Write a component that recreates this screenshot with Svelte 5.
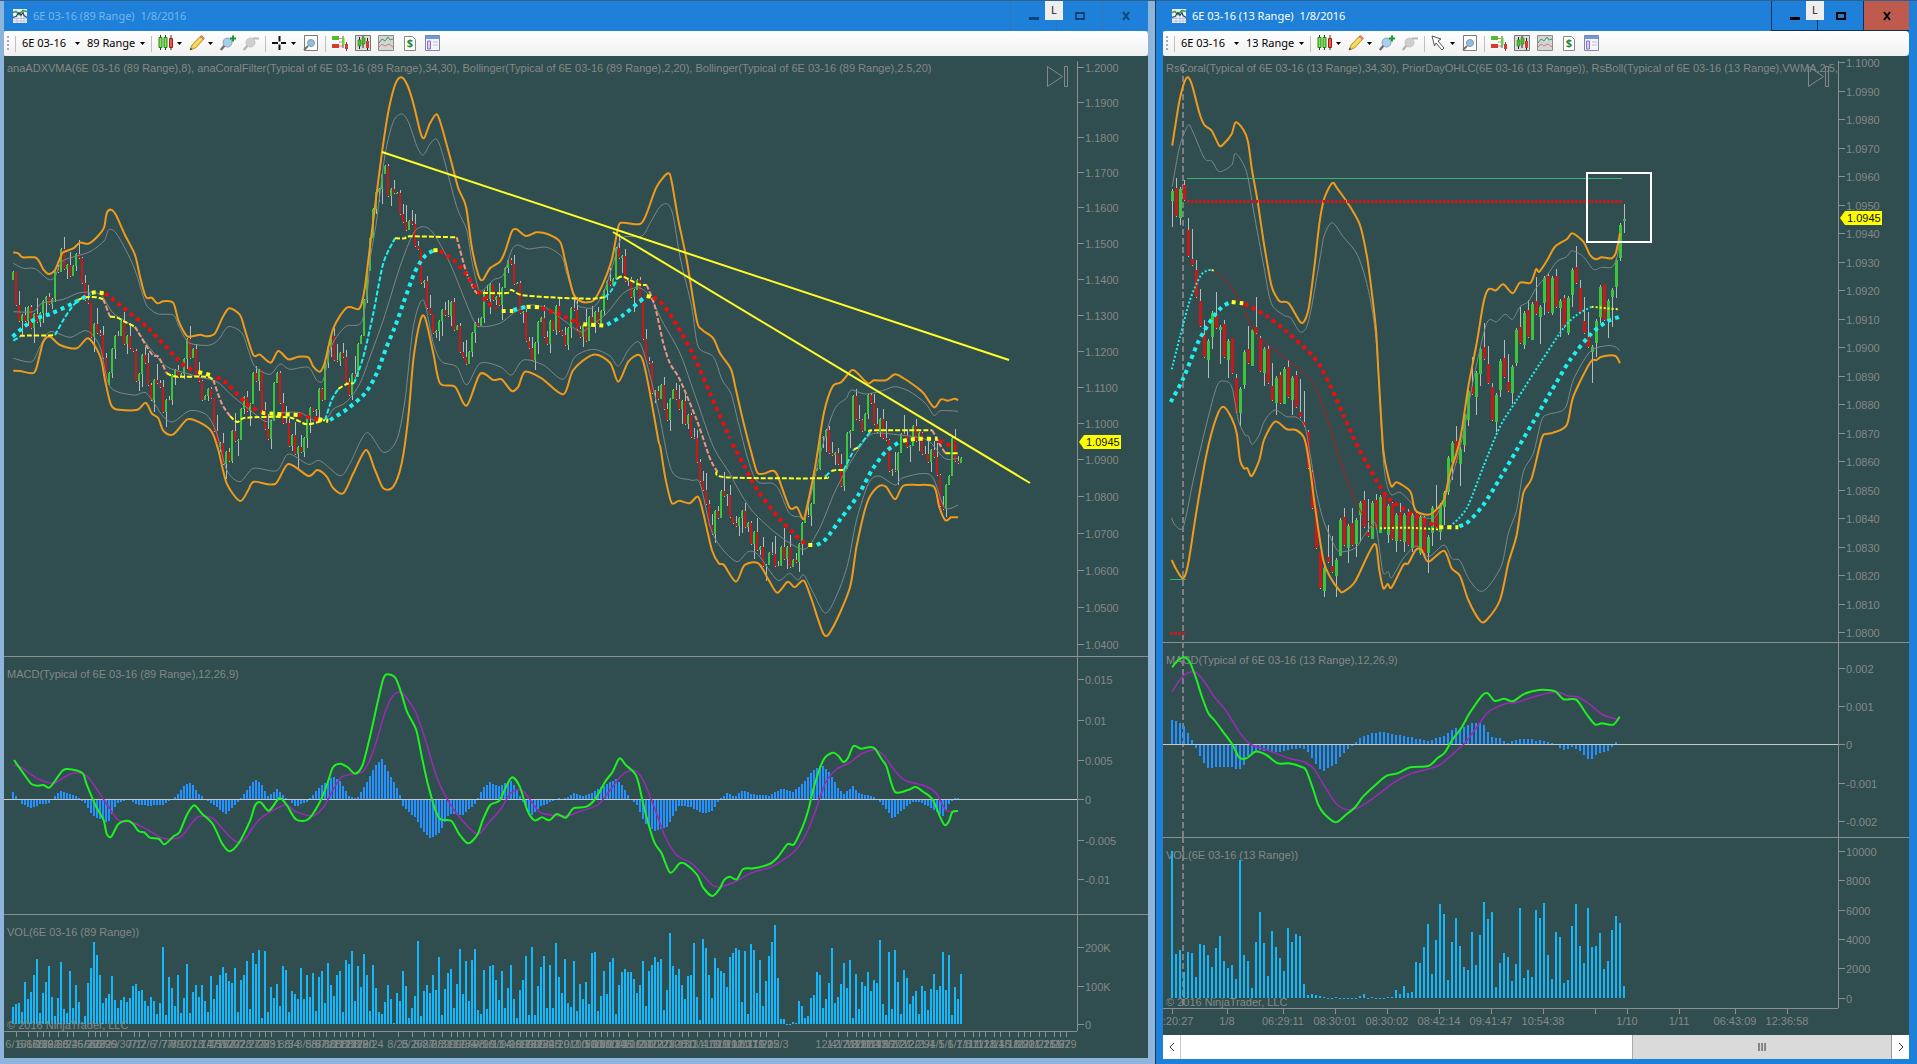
<script>
  // Every trace belongs to a tile: an origin on the chart and the number of
  // trace units per pixel on each axis.
  const tile = (x0, y0, sx = 3, sy = 3) => (points) =>
    points.split(" ").map((pair) => {
      const [x, y] = pair.split(",").map(Number);
      return [x0 + x / sx, y0 + y / sy];
    });

  const topLeft = tile(0, 0);
  const midLeft = tile(0, 200);
  const peak = tile(330, 60);
  const recent = tile(600, 200, 2.904);
  const lowLeft = tile(0, 650, 2.703);
  const lowRight = tile(560, 650, 2.658);
  const fastTop = tile(1140, 0, 2.018);
  const fastMid = tile(1140, 220);
  const fastLow = tile(1140, 630, 2.018);

  // Catmull-Rom spline through the points
  function curve(pts) {
    let d = `M${pts[0][0].toFixed(1)} ${pts[0][1].toFixed(1)}`;
    for (let i = 0; i < pts.length - 1; i++) {
      const p0 = pts[i - 1] ?? pts[i];
      const p1 = pts[i];
      const p2 = pts[i + 1];
      const p3 = pts[i + 2] ?? p2;
      const c = [
        p1[0] + (p2[0] - p0[0]) / 7,
        p1[1] + (p2[1] - p0[1]) / 7,
        p2[0] - (p3[0] - p1[0]) / 7,
        p2[1] - (p3[1] - p1[1]) / 7,
        p2[0],
        p2[1],
      ];
      d += "C" + c.map((n) => n.toFixed(1)).join(" ");
    }
    return d;
  }

  const line = (kind, ...parts) => ({ kind, d: curve(parts.flat()) });
  const segments = (kind, at, list) =>
    list.map(([tone, pts]) => line(`${kind} ${tone}`, at(pts)));

  function valueAt(pts, x) {
    let i = 1;
    while (i < pts.length - 1 && pts[i][0] < x) i++;
    const [a, b] = [pts[i - 1], pts[i]];
    const t = Math.min(1, Math.max(0, (x - a[0]) / (b[0] - a[0])));
    return a[1] + (b[1] - a[1]) * t;
  }

  function bar(x, y, base) {
    return { x, y: Math.min(y, base), h: Math.max(1, Math.abs(base - y)) };
  }

  const nums = (text) => text.trim().split(/[\s,]+/).map(Number);
  const columns = (text, x0, step, top, base) =>
    nums(text).map((v, i) => bar(x0 + i * step, top + v / 3, base));

  // ---- 89 range chart ----
  const swings = nums(
    `13 280 17 305 22 322 26 310 31 325 37 315 44 310 52 290 60 255 66 272 78 262 84 285 88 310 92 335
     97 330 104 355 107 400 110 375 115 330 120 325 127 345 131 345 137 380 142 365 147 375 152 395 157 375
     162 410 167 405 172 375 178 385 184 350 188 345 194 360 198 385 203 395 210 400 214 425 220 450 228 465
     233 430 238 440 243 405 248 405 254 375 258 370 265 435 270 430 276 375 286 430 290 440 297 455 305 435
     313 405 323 390 329 335 336 360 343 365 350 390 357 360 363 320 368 250 376 200 382 165 386 175 390 200
     394 190 401 210 406 240 412 218 417 250 421 275 430 320 438 335 444 310 450 305 456 330 463 363 470 350
     478 320 486 290 492 295 497 305 503 285 511 258 515 280 521 310 530 360 540 325 547 335 556 315 563 345
     572 315 578 325 585 335 592 320 600 315 608 285 613 270 618 245 624 275 630 290 638 290 641 320 648 365
     655 400 662 390 667 420 675 390 683 410 690 430 697 455 701 490 705 510 712 525 720 505 723 490 730 510
     737 540 742 505 748 530 756 545 766 565 775 560 785 550 792 570 800 540 806 520 812 490 818 455 824 430
     832 455 841 480 847 440 853 405 860 430 868 405 875 420 883 430 891 480 900 445 908 440 915 430 925 460
     931 450 940 500 945 500 950 460 953 440 957 475 962 445`
  ).reduce((out, n, i, all) => (i % 2 ? out : [...out, [n, all[i + 1]]]), []);

  function rangeBars(path, from, to, step, range) {
    const out = [];
    let close = path[0][1];
    for (let x = from, i = 0; x <= to; x += step, i++) {
      const open = close;
      close = valueAt(path, x) + [-8, 6, 9, -7, 8, -9, 3, -6, 7, 0, -10][i % 11];
      const up = close < open;
      const high = up ? close - 1 : Math.max(close - range, Math.min(open, close) - ((i * 7) % 20));
      const low = up ? Math.min(close + range, open + ((i * 5) % 20)) : close + 1;
      out.push({
        x,
        up,
        top: Math.min(open, close),
        bottom: Math.max(open, close),
        high: Math.min(high, open),
        low: Math.max(low, open),
      });
    }
    return out;
  }

  const slowBands = [
    line(
      "inner",
      topLeft("40,790 70,805 105,806 145,838 165,830 185,785 230,768 270,755 312,723 325,690 345,695 375,745 405,810 435,905 450,927 475,942 520,945"),
      midLeft("535,375 550,405 570,430 625,436 655,420 685,380 725,398 745,450 765,500 810,523 840,492 870,508 925,502 950,540 970,540 990,450 1010,410 1040,378 1075,375 1090,350 1105,250"),
      peak("120,600 140,480 165,285 190,185 215,162 235,185 262,262 280,285 300,252 320,238 340,290 380,440 410,510 425,600 445,685 460,690 490,660 520,645 545,570 565,555 595,567 650,562 695,590 710,640 740,730 760,742 790,742 820,700 850,610 875,535 935,528 960,490 990,440 1014,433 1030,470 1050,590 1085,740 1105,860 1150,890"),
      recent("355,540 380,580 400,660 430,780 457,845 500,850 520,870 550,940 580,950 598,945 640,760 680,630 715,595 730,570 770,582 820,572 857,560 900,575 945,610 970,646 990,632 1040,634")
    ),
    line(
      "inner",
      midLeft("40,335 100,335 125,310 190,298 240,278 300,283 340,340 400,380 450,445 500,500 560,520 600,532 650,545 700,590 750,630 800,665 840,640 900,638 940,660 980,655 1000,627 1040,605 1080,550 1110,470 1150,360 1200,200 1240,100 1270,80 1300,100 1350,190 1420,360 1445,380 1500,370"),
      peak("550,760 600,735 650,745 700,780 750,815 780,800 830,760 880,700 925,683 960,710 1000,790 1050,880 1100,1020 1150,1160"),
      recent("377,820 400,865 440,930 500,990 560,1035 600,1045 640,980 680,880 720,800 770,720 800,700 870,705 950,720 1000,775 1040,775")
    ),
    line(
      "inner",
      midLeft("40,475 95,485 120,440 150,395 210,412 260,392 300,440 330,560 400,585 440,580 490,650 520,665 570,632 620,645 650,700 680,810 720,845 760,805 830,812 865,762 925,793 960,782 1020,827 1050,790 1100,698 1150,757 1190,720 1215,600 1240,380 1270,300 1300,430 1325,485 1370,500 1400,555 1440,490 1500,500"),
      peak("545,945 580,900 640,915 700,958 735,890 790,868 840,888 865,918 895,870 925,845 945,890 985,1050"),
      recent("208,812 263,840 290,850 320,980 350,1040 397,1085 430,1055 460,1065 515,1140 550,1120 575,1140 592,1125 620,1180 655,1240 690,1180 720,1090 745,960 780,850 810,828 857,855 880,833 960,825 1000,922 1040,915")
    ),
    line(
      "band",
      topLeft("40,757 55,760 68,772 105,772 118,785 130,808 147,822 165,810 180,775 190,757 220,745 240,728 265,731 292,710 312,683 320,640 333,629 348,645 375,705 405,765 420,830 435,885 443,895 455,893 472,910 490,904 515,905 523,915"),
      midLeft("535,360 550,392 565,410 600,404 620,409 645,400 668,352 688,325 720,345 735,390 760,465 780,464 812,488 835,453 865,478 895,470 925,472 940,500 960,515 975,485 1000,385 1040,323 1075,328"),
      peak("95,730 105,680 120,560 140,400 157,270 175,155 195,75 213,52 232,75 250,130 272,220 283,233 300,190 320,163 335,200 365,310 385,385 408,440 425,560 445,645 458,660 480,625 510,605 525,575 545,515 560,508 588,528 620,517 655,523 690,545 705,600 730,700 755,725 790,722 815,680 845,600 865,500 880,488 930,492 950,460 980,380 1014,340 1025,365 1045,480 1070,600 1100,780 1115,808 1150,835 1170,880"),
      recent("380,507 395,570 415,660 440,760 457,818 480,820 500,812 515,825 550,922 572,922 590,958 600,925 625,800 650,640 675,560 700,547 730,511 745,517 778,550 795,541 830,541 857,523 885,537 920,562 940,580 970,622 990,598 1010,602 1030,596 1040,601")
    ),
    line(
      "band",
      midLeft("40,512 60,513 102,518 118,470 130,425 150,410 180,435 230,445 265,415 300,468 315,540 330,605 345,627 410,630 437,608 455,640 475,655 490,692 520,703 562,658 600,668 635,695 655,750 680,850 720,903 745,870 762,845 825,852 865,792 925,828 952,810 980,830 1000,865 1030,880 1060,820 1098,750 1125,810 1150,865 1180,860 1205,790 1225,650 1240,480 1260,365 1275,353 1300,460 1320,550 1365,560 1400,617 1440,522 1480,540"),
      peak("515,958 545,993 565,980 585,935 635,955 700,1003 730,930 790,884 840,908 865,965 895,905 925,884 940,905 960,1000 985,1140"),
      recent("175,740 190,835 208,908 230,902 260,910 285,890 300,940 325,1050 345,1090 360,1095 395,1145 420,1095 460,1090 490,1140 515,1178 545,1145 565,1162 592,1142 615,1200 650,1303 675,1285 725,1165 745,1040 775,910 805,862 830,860 857,898 880,858 920,855 970,860 985,920 1003,961 1020,952 1040,952")
    ),
  ];

  const slowOverlays = [
    ...segments("adx", midLeft, [
      ["cyan", "40,422 60,410"],
      ["yellow", "60,407 165,406"],
      ["cyan", "165,405 190,360 215,322 235,300"],
      ["yellow", "235,300 255,292 290,292 310,298"],
      ["salmon", "310,298 330,350"],
      ["yellow", "330,350 350,352 380,368 405,380"],
      ["salmon", "405,380 455,462 475,470 500,520"],
      ["yellow", "500,520 530,530 620,530 640,540"],
      ["salmon", "640,540 665,610 690,648"],
      ["yellow", "690,648 712,666 740,653 865,652 920,673 975,660"],
      ["cyan", "975,660 995,600 1015,567"],
      ["yellow", "1015,567 1040,552 1062,550"],
      ["cyan", "1062,550 1090,470 1120,340 1150,190 1185,115"],
      ["yellow", "1185,115 1215,115 1230,109 1370,112"],
      ["salmon", "1370,112 1400,220 1428,278"],
    ]),
    ...segments("adx", peak, [
      ["yellow", "438,698 510,700 535,698 545,690 575,705 660,712 780,716 825,712"],
      ["cyan", "825,712 845,690 862,655"],
      ["yellow", "862,655 880,650 925,673 950,675"],
      ["salmon", "950,675 975,740 1000,850 1020,910 1050,960 1100,1080 1140,1195 1160,1232"],
    ]),
    ...segments("adx", recent, [
      ["yellow", "339,812 365,832 640,835 655,828"],
      ["cyan", "655,828 672,813"],
      ["yellow", "672,813 685,810 708,810"],
      ["cyan", "708,810 738,748"],
      ["yellow", "738,748 750,742"],
      ["cyan", "750,742 785,695"],
      ["yellow", "785,695 795,691 965,691"],
      ["salmon", "965,691 985,730 1003,760"],
      ["yellow", "1003,760 1040,760"],
    ]),
    ...segments("coral", midLeft, [
      ["cyan", "38,410 75,378 110,355 150,342 215,312 270,282"],
      ["yellow", "275,278 290,277 315,280"],
      ["red", "315,280 370,323 450,390 545,490 590,515"],
      ["yellow", "595,516 630,525"],
      ["red", "650,532 680,550 740,612 785,637"],
      ["yellow", "785,637 800,640 895,645"],
      ["red", "895,645 955,658"],
      ["yellow", "955,658 985,662"],
      ["cyan", "990,660 1040,628 1095,580 1130,520 1160,440 1185,380 1210,310 1245,215 1275,168 1300,152"],
      ["yellow", "1300,151 1315,150"],
      ["red", "1320,153 1360,180 1395,218 1430,268 1460,305 1490,325"],
    ]),
    ...segments("coral", peak, [
      ["yellow", "515,753 550,753"],
      ["cyan", "550,750 590,740"],
      ["yellow", "590,740 630,742"],
      ["red", "635,744 700,768 750,793"],
      ["yellow", "760,793 825,797"],
      ["cyan", "832,794 880,765 940,715"],
      ["yellow", "950,708 970,712"],
      ["red", "970,712 1000,735 1040,795 1090,885 1140,1000 1200,1135"],
    ]),
    ...segments("coral", recent, [
      ["red", "385,732 420,800 460,875 520,955 580,1018 598,1030"],
      ["yellow", "605,1035 622,1035"],
      ["cyan", "630,1035 655,1018 700,955 750,885 790,810 830,755 875,722"],
      ["yellow", "880,722 915,717 980,716"],
      ["red", "985,722 1035,745"],
    ]),
    { kind: "trend", d: "M382 152 L1009 360" },
    { kind: "trend", d: "M613 232 L1030 483" },
  ];

  const slowMacd = [
    line(
      "signal",
      lowLeft("38,345 55,350 80,370 105,388 145,400 175,380 205,368 235,378 260,415 290,465 320,510 360,518 400,540 440,565 485,563 505,540 535,500 575,505 600,535 635,573 660,570 685,530 710,500 770,465 800,485 845,498 875,470 900,420 925,380 965,370 985,360 1010,300 1040,190 1060,140 1080,127 1100,145 1125,190 1150,270 1180,380 1210,450 1245,505 1290,552 1320,520 1355,475 1380,430 1410,420 1440,460 1465,490 1530,498"),
      lowRight("50,485 100,465 130,425 160,380 185,362 205,365 225,400 250,470 280,560 310,615 350,640 380,675 405,705 425,711 470,693 510,668 560,652 595,628 625,602 655,550 680,480 705,400 735,358 770,338 800,312 835,300 860,315 885,355 915,390 970,408 1000,430 1025,480 1055,485")
    ),
    line(
      "macd",
      lowLeft("38,330 60,365 85,402 105,407 118,405 135,412 165,367 178,357 210,362 225,372 235,405 260,470 280,510 288,550 300,561 320,522 345,512 360,522 375,544 390,547 405,563 430,567 445,583 470,558 485,547 505,495 525,466 545,490 575,522 600,580 620,604 645,580 675,515 690,465 705,457 727,482 755,445 775,465 800,508 833,508 865,455 885,400 900,352 920,341 940,352 960,371 980,345 1000,260 1020,160 1035,90 1045,73 1068,82 1085,130 1100,185 1125,240 1140,320 1155,395 1175,475 1190,508 1220,513 1240,550 1265,580 1290,555 1305,510 1325,465 1350,452 1370,405 1385,382 1405,410 1425,480 1445,511 1465,502 1485,511 1505,492 1530,503 1550,475"),
      lowRight("70,470 95,445 120,395 140,365 158,325 175,345 200,372 210,405 225,480 250,575 270,610 293,668 318,640 335,643 365,675 380,712 405,738 425,715 435,692 450,680 470,688 487,657 515,655 557,642 580,620 605,582 622,583 645,530 660,480 675,410 700,330 725,308 740,318 753,336 765,325 780,288 800,296 825,291 838,297 855,328 868,350 890,425 925,420 945,411 965,425 990,448 1010,500 1022,525 1033,515 1043,486 1058,483")
    ),
  ];

  const slowHistShape = [
    ...lowLeft("35,427 45,440 60,462 85,475 110,462 135,460 150,437 165,422 180,430 210,440 230,460 250,497 292,518 315,462 345,447 375,465 405,467 440,465 460,452 480,435 500,405 518,398 535,430 555,447 580,465 610,493 640,460 660,430 690,388 705,400 725,440 750,417 770,440 800,470 830,455 860,415 900,380 920,395 945,440 965,447 985,410 1010,355 1032,325 1050,365 1080,430 1090,470 1125,505 1140,540 1165,567 1190,545 1215,490 1250,497 1285,460 1305,415 1325,397 1350,410 1380,390 1400,425 1415,460 1437,497 1460,470 1490,455 1510,445"),
    ...lowRight("10,446 38,430 65,438 90,425 120,405 150,387 165,405 185,445 205,465 225,520 252,543 285,530 315,468 345,470 380,490 405,483 425,448 445,428 465,440 487,420 510,432 555,437 590,415 620,425 650,395 670,365 697,345 715,365 740,415 755,433 778,408 795,430 835,440 860,467 885,507 910,480 940,453 965,460 1000,485 1018,497 1035,460 1050,445 1060,445"),
  ];
  const slowHist = Array.from({ length: 316 }, (_, i) =>
    bar(12 + i * 3, valueAt(slowHistShape, 13 + i * 3), 799)
  );

  const slowVolume = columns(
    `1070 1062 1059 1086 996 1047 1026 975 927 1089 1029 996 948 1041 1098 1045 936 1078 1088 963 1074 1005 1056 1117
     1099 999 954 877 915 975 1059 1045 1032 978 1050 1074 1050 1041 1056 1045 1008 1002 1023 1020 1053 1068 1041 1053
     1092 1060 891 1096 981 1014 1068 975 1089 1045 942 1089 1026 1005 1041 1005 1053 1086 978 1047 1005 975 951 969
     993 999 954 1086 990 975 933 1077 909 942 900 1104 903 1087 1011 1045 1002 1068 948 960 1086 1023 1032 1047
     954 1047 975 1041 969 1083 981 963 1060 939 1005 1038 975 963 1087 930 941 903 1053 948 1012 912 975 1083
     945 1014 1087 1092 1056 1005 1047 1119 1029 1053 963 1008 1104 1074 1038 873 1098 1023 1005 1029 975 1020 921 1095
     1017 969 957 1074 1002 897 1032 933 1053 930 897 1080 1092 960 1077 948 945 990 1050 963 1074 1014 945 1047
     1104 1020 990 918 1095 891 1095 1008 951 918 1074 945 1074 879 981 1029 927 1059 1071 933 1083 1002 1047 996
     1062 909 906 1083 1038 963 1032 936 924 1092 1005 966 957 966 966 987 1029 1005 933 1068 963 945 921 936
     927 1080 1020 849 948 975 957 1005 1047 978 975 879 1041 1110 867 894 975 1045 924 954 963 969 1011 921
     909 894 900 1056 903 1092 882 900 1029 930 1068 993 918 876 825 984 1107 1107 1122 1122 1116 1119 1053 1068
     1104 1098 1044 1035 966 975 1074 1047 999 894 1059 1041 1002 939 1014 930 1104 972 1077 996 1008 966 1023 990
     999 870 1062 1095 906 1077 900 996 1092 960 984 1062 1038 1023 1092 1008 1023 1080 1017 972 1020 1008 906 1020
     915 1095 1011 1047 972`,
    12, 3, 650, 1024
  );

  const slowDates =
    `16 6/16,28 6/17,37 6/18,43 6/19,49 6/22,58 6/23,67 6/24,73 6/25,88 6/26,95 6/28,100 6/29,107 6/29,121 6/30,134 7/1,
     139 7/2,148 7/6,160 7/7,169 7/8,175 7/9,181 7/10,193 7/13,202 7/14,211 7/15,218 7/16,223 7/17,229 7/20,235 7/22,
     241 7/23,250 7/27,259 7/28,265 7/29,271 7/31,286 8/3,292 8/4,304 8/5,313 8/6,319 8/7,326 8/10,334 8/11,340 8/12,
     346 8/13,352 8/17,358 8/19,364 8/20,373 8/24,398 8/25,412 8/26,424 8/27,433 8/28,442 8/31,451 9/1,457 9/2,463 9/3,
     469 9/4,477 9/8,484 9/10,493 9/11,501 9/14,511 9/16,520 9/17,526 9/18,532 9/21,538 9/23,544 9/24,550 9/25,559 9/29,
     568 10/2,580 10/5,586 10/6,595 10/8,601 10/9,607 10/13,613 10/14,619 10/15,628 10/16,637 10/20,649 10/22,655 10/22,
     661 10/23,673 10/28,682 10/30,688 11/3,697 11/4,709 11/6,718 11/9,724 11/10,730 11/12,739 11/13,745 11/17,751 11/19,
     760 11/20,766 11/25,778 12/3,826 12/4,838 12/7,847 12/8,856 12/9,862 12/11,868 12/14,874 12/15,880 12/16,889 12/17,
     898 12/21,907 12/22,916 12/29,928 1/4,937 1/5,946 1/6,955 1/7,964 1/8,973 1/11,979 1/12,985 1/13,994 1/14,1000 1/15,
     1009 1/18,1018 1/19,1024 1/20,1030 1/21,1039 1/22,1045 1/25,1054 1/26,1060 1/27,1066 1/29`;
  const dates = (text) =>
    text.split(",").map((item) => {
      const [x, label] = item.trim().split(" ");
      return { x: Number(x), label };
    });

  // ---- 13 range chart ----
  // direction, body top, body bottom, wick end
  const fastBars = `g191,201,227 r188,216,178 g189,218,225 r185,200,180 r230,256,218 r259,265,229 r270,297,260 r301,326,289
    r335,357,320 g341,360,378 g313,337,349 r315,328,292 g327,330,364 r324,357,320 g341,360,378 r338,373,338 r378,412,374
    g389,413,426 g352,385,389 r349,363,326 g330,366,366 r327,333,297 r338,371,336 g349,373,386 r349,383,345 r386,400,363
    g378,403,415 r375,403,372 g369,404,404 r367,397,360 g378,400,415 r375,407,371 r412,417,379 r422,426,391 r432,468,430
    r472,508,470 r508,548,508 r552,588,552 g568,591,597 r557,562,525 r566,572,536 g560,576,597 g520,556,556 r517,545,508
    g526,548,563 r523,545,508 g520,544,557 g503,515,542 r500,527,491 r532,536,499 g503,539,539 r500,528,494 g497,533,533
    r493,528,492 g506,535,543 r503,539,502 g515,541,552 r512,540,503 g515,542,552 r512,545,509 g515,548,552 r513,548,511
    g517,553,555 r517,553,516 g537,553,573 g508,533,546 r510,527,485 g505,532,540 g493,507,525 g458,492,495 g443,462,480
    r441,462,426 g449,464,486 g414,445,452 g391,420,426 r386,394,357 g373,397,415 g349,374,386 r347,359,323 r364,383,346
    r387,420,383 g395,422,432 g361,390,397 r358,377,340 r382,391,354 g367,393,404 g330,363,366 r327,343,307 g313,345,349
    r310,337,300 g304,340,340 r301,314,277 g307,317,344 g278,303,315 r276,312,274 g278,313,315 r276,307,269 g301,308,337
    r298,327,295 g298,333,335 g270,295,307 r267,283,246 r288,312,280 r321,333,297 r337,347,312 g347,352,383 g321,343,357
    g287,317,323 r284,320,284 g301,321,338 g290,297,327 g260,287,298 g225,258,261`
    .trim()
    .split(/\s+/)
    .map((item, i) => {
      const up = item[0] === "g";
      const [top, bottom, wick] = item.slice(1).split(",").map(Number);
      return {
        x: 1172 + i * 4,
        up,
        top,
        bottom,
        high: up ? top - 2 : wick,
        low: up ? wick : bottom + 1,
      };
    });
  // the bar still forming has a wick on both sides
  fastBars.push({ x: 1624, up: true, top: 219, bottom: 221, high: 204, low: 233 });

  const fastBands = [
    line(
      "inner",
      fastTop("65,560 80,440 97,376 105,390 130,475 145,483 160,515 185,495 193,460 215,515 230,640 250,800 265,910 290,945 305,955 322,995 335,985 345,930 365,760 372,705 388,668 410,710 435,755 450,810 465,900"),
      fastMid("710,380 730,720 750,820 780,817 815,850 840,885 865,895 890,885 930,790 970,640 1000,480 1040,310 1070,305 1095,283 1118,298 1140,260 1165,245 1188,205 1222,165 1250,125 1280,110 1297,92 1330,110 1360,148 1385,142 1415,142 1430,115 1440,60")
    ),
    line(
      "inner",
      fastMid("95,893 105,915 130,920 160,780 200,610 230,500 250,483 275,500 295,600 315,645 325,648 336,673 355,650 375,600 405,570 440,590 470,592 495,620 510,700 530,820 550,900 580,970 600,995 645,985 670,950 700,910 708,915 720,1000 730,1060 745,1055 755,1073 790,1015 830,978 865,1010 912,975 935,1015 960,1022 985,1075 1018,1113 1045,1100 1085,1035 1105,940 1130,870 1150,755 1180,700 1205,600 1225,583 1275,565 1300,480 1350,395 1400,377 1425,380 1440,392")
    ),
    line(
      "band",
      fastTop("65,437 72,370 80,300 90,245 97,232 105,255 120,340 130,375 145,393 160,437 170,430 185,402 193,367 208,388 218,425 226,510 237,600 250,730 265,855 275,890 283,905 300,910 323,965 332,962 341,920 352,800 362,670 372,595 388,549 398,565 415,600 430,635 445,680 458,770 468,880"),
      fastMid("708,330 715,450 730,690 745,770 755,800 770,787 805,808 815,825 827,872 865,884 890,868 912,838 930,760 960,660 985,500 1010,370 1030,250 1043,210 1055,207 1068,211 1090,193 1118,220 1140,188 1172,188 1188,148 1198,155 1222,120 1245,80 1280,58 1297,40 1330,65 1350,105 1368,118 1385,112 1415,115 1428,97 1440,40")
    ),
    line(
      "band",
      fastMid("95,1020 110,1050 130,1075 145,1030 170,870 200,700 230,590 250,560 275,595 290,640 300,720 312,745 322,745 335,768 358,720 372,660 405,605 440,628 468,630 493,655 508,730 525,860 550,1020 570,1070 600,1113 610,1115 645,1085 690,992 708,975 718,1050 730,1105 743,1092 755,1102 790,1035 805,1030 827,990 845,990 865,1025 912,992 935,1045 960,1068 985,1140 1020,1202 1040,1200 1080,1140 1105,1030 1130,945 1150,820 1175,775 1205,655 1220,642 1240,638 1280,615 1300,530 1350,428 1370,420 1385,410 1425,407 1440,430")
    ),
  ];

  const fastOverlays = [
    { kind: "high", d: "M1187 178.5 H1622 M1170 579.5 H1186" },
    { kind: "low", d: "M1187 201.5 H1622" },
    { kind: "low", d: "M1170 633.5 H1185" },
    ...segments("dots", fastMid, [
      ["cyan", "95,448 120,350 150,240 180,170 200,152 215,150"],
      ["yellow", "215,150 225,153"],
      ["darkred", "225,153 270,195 310,265 350,345 430,408 500,465 530,510 570,620 610,750 660,870 700,920"],
      ["yellow", "720,925 800,923 895,928"],
      ["cyan", "930,920 980,865 1030,740 1080,620 1130,540 1200,430 1270,325 1310,285 1355,260"],
      ["yellow", "1355,260 1400,265 1437,268"],
    ]),
    ...segments("coral", fastMid, [
      ["cyan", "92,546 130,475 175,365 215,298 245,262 268,248"],
      ["yellow", "275,246 310,250"],
      ["red", "314,251 380,288 440,335 520,410 560,475 610,585 660,693 730,815 765,850 830,890 895,921"],
      ["yellow", "898,922 955,922"],
      ["cyan", "958,919 985,905 1030,855 1080,775 1130,690 1180,605 1230,520 1290,420 1350,345 1400,305 1437,291"],
    ]),
    { kind: "frame", d: "M1587 173 H1651 V242 H1587 Z" },
  ];

  const fastMacd = [
    line("signal", fastLow("65,185 80,150 95,130 112,127 130,155 150,200 175,245 200,305 222,342 260,362 300,385 330,395 350,415 365,450 390,510 405,532 425,540 445,530 475,500 510,460 545,432 580,418 605,405 625,380 655,340 680,290 700,250 715,235 740,220 762,217 800,198 840,187 865,198 882,200 905,220 935,255 965,268")),
    line("macd", fastLow("65,112 75,93 88,82 100,95 112,140 125,200 138,250 150,270 170,310 187,345 200,382 215,385 233,365 255,375 278,400 300,400 325,410 335,420 350,480 360,525 372,552 395,577 415,555 435,530 450,500 475,465 498,437 520,430 545,412 582,408 600,385 615,368 630,330 648,295 665,250 690,197 702,190 716,213 735,206 752,214 775,192 798,182 812,179 838,184 855,208 880,209 900,250 918,283 932,280 955,284 968,260")),
  ];

  const fastHist = columns(
    `270 274 280 288 309 330 353 378 400 413 413 411 411 411 411 411 416 416 404 378 374 366 359 362 363 366 366 366 363
     360 357 357 355 358 366 383 403 418 422 413 408 401 381 369 356 348 335 324 318 315 309 309 306 306 309 311 315 316
     318 320 321 327 327 330 332 330 324 320 318 309 300 294 297 290 284 279 279 276 285 307 320 323 323 333 339 333 331
     327 327 327 327 333 330 333 336 339 345 355 360 357 351 357 363 374 386 386 374 369 367 362 350 336`,
    1171, 4, 630, 744
  );

  const fastVolume = columns(
    `663 972 960 1026 966 969 1041 942 945 975 1011 954 918 993 1014 1005 1047 690 975 993 1074 936 846 939 1038 903 951
     984 1023 894 936 912 918 1062 1095 1092 1095 1098 1101 1104 1104 1101 1104 1104 1104 1104 1104 1098 1092 1104 1101
     1104 1104 1104 1101 1101 1080 1092 1068 1089 1086 996 999 951 882 1032 930 822 852 1050 936 864 948 1011 1020 906
     1005 915 816 867 846 1071 999 969 981 1053 1002 834 1045 1020 1041 840 864 819 975 1047 906 921 1059 1050 888 822
     948 999 834 951 948 909 1017 993 900 858 879 1068`,
    1171, 4, 630, 998
  );

  const priceScale = (ys, from, step) =>
    ys.map((y, i) => ({ y, label: (from - i * step).toFixed(4) }));
  const scale = (...pairs) => pairs.map(([y, label]) => ({ y, label }));

  const windows = [
    {
      id: "slow",
      caption: "6E 03-16 (89 Range)\u00a0 1/8/2016",
      interval: "89 Range",
      cursor: "cross",
      x: 4,
      width: 1144,
      axis: 1077,
      panels: [
        {
          y: 56,
          height: 600,
          titleY: 72,
          title:
            "anaADXVMA(6E 03-16 (89 Range),8), anaCoralFilter(Typical of 6E 03-16 (89 Range),34,30), Bollinger(Typical of 6E 03-16 (89 Range),2,20), Bollinger(Typical of 6E 03-16 (89 Range),2.5,20)",
          scale: priceScale([67, 102, 137, 172, 207, 243, 279, 315, 351, 387, 423, 459, 496, 533, 570, 607, 644], 1.2, 0.01),
          under: slowBands,
          candles: rangeBars(swings, 13, 963, 3, 32),
          candleWidth: 2,
          over: slowOverlays,
          price: 442,
          jump: 1047,
        },
        {
          y: 656,
          height: 258,
          titleY: 678,
          title: "MACD(Typical of 6E 03-16 (89 Range),12,26,9)",
          scale: scale([679, "0.015"], [720, "0.01"], [760, "0.005"], [799, "0"], [840, "-0.005"], [879, "-0.01"]),
          hist: slowHist,
          zero: 799,
          over: slowMacd,
        },
        {
          y: 914,
          height: 144,
          titleY: 936,
          title: "VOL(6E 03-16 (89 Range))",
          scale: scale([947, "200K"], [986, "100K"], [1024, "0"]),
          volume: slowVolume,
          copyright: 1029,
          floor: 1031,
          dates: dates(slowDates),
          dateY: 1048,
        },
      ],
    },
    {
      id: "fast",
      focused: true,
      caption: "6E 03-16 (13 Range)\u00a0 1/8/2016",
      interval: "13 Range",
      cursor: "arrow",
      x: 1163,
      width: 746,
      axis: 1838,
      panels: [
        {
          y: 56,
          height: 586,
          titleY: 72,
          title:
            "RsCoral(Typical of 6E 03-16 (13 Range),34,30), PriorDayOHLC(6E 03-16 (13 Range)), RsBoll(Typical of 6E 03-16 (13 Range),VWMA,2.5,20)",
          scale: priceScale(Array.from({ length: 21 }, (_, i) => Math.round(62 + i * 28.5)), 1.1, 0.001),
          session: [67, 642],
          under: fastBands,
          candles: fastBars,
          candleWidth: 3,
          over: fastOverlays,
          price: 218,
          jump: 1808,
        },
        {
          y: 642,
          height: 195,
          titleY: 664,
          title: "MACD(Typical of 6E 03-16 (13 Range),12,26,9)",
          scale: scale([668, "0.002"], [706, "0.001"], [744, "0"], [783, "-0.001"], [821, "-0.002"]),
          session: [642, 837],
          hist: fastHist,
          zero: 744,
          over: fastMacd,
        },
        {
          y: 837,
          height: 198,
          titleY: 859,
          title: "VOL(6E 03-16 (13 Range))",
          scale: scale([851, "10000"], [880, "8000"], [910, "6000"], [939, "4000"], [968, "2000"], [998, "0"]),
          session: [837, 1006],
          volume: fastVolume,
          copyright: 1006,
          floor: 1008,
          dates: dates(
            "1172 19:20:27,1227 1/8,1283 06:29:11,1335 08:30:01,1387 08:30:02,1439 08:42:14,1491 09:41:47,1543 10:54:38,1595 ,1627 1/10,1679 1/11,1735 06:43:09,1787 12:36:58"
          ),
          dateY: 1025,
        },
      ],
    },
  ];
</script>

{#snippet caret()}
  <svg class="caret" viewBox="0 0 5 3"><path d="M0 0h5L2.5 3z" /></svg>
{/snippet}

{#snippet chartIcon()}
  <svg class="chart-icon" viewBox="0 0 14 14">
    <path d="M0 0h14v14H0z" fill="#eef3f8" />
    <path d="M0 9.500h14M0 12h14M4 7v7M8 7v7M11 7v7" stroke="#b5b2da" stroke-width="0.800" />
    <path d="M0 3.500l3-1 3 3 4-4 4 1" fill="none" stroke="#3aa23c" stroke-width="1.600" />
    <path d="M0 8.500l3-1 3-4 2 3 2-3 1 3 3 2" fill="none" stroke="#29406d" stroke-width="1.200" />
  </svg>
{/snippet}

{#snippet glass(sign)}
  <svg viewBox="0 0 16 16">
    <path d="M5 10L0.800 15" stroke={sign === "minus" ? "#b5b5b5" : "#75706c"} stroke-width="2.400" />
    <circle cx="7.500" cy="7.500" r="4.500" fill={sign === "minus" ? "#cfcfcf" : "#a9cdec"} stroke={sign === "minus" ? "#c4c4c4" : "#8aa4bb"} />
    {#if sign === "plus"}
      <path d="M10 3.500h6M13 0.500v6" stroke="#159b2a" stroke-width="2" />
    {:else}
      <path d="M10 3.500h6" stroke="#b9b9b9" stroke-width="2" />
    {/if}
  </svg>
{/snippet}

<main class="desktop">
  {#each windows as win (win.id)}
    <section class="window" class:focused={win.focused} aria-label={win.caption}>
      <header class="caption">
        {@render chartIcon()}
        <h1>{win.caption}</h1>
        <div class="controls">
          <button aria-label="Minimize">
            <svg viewBox="0 0 10 10"><path d="M0 7.500h10" stroke-width="3" /></svg>
          </button>
          <button aria-label="Maximize">
            <svg viewBox="0 0 10 10"><path d="M1 2h8v6H1z" stroke-width="2" /></svg>
          </button>
          <button class="close" aria-label="Close">
            <svg viewBox="0 0 10 10"><path d="M2 1l6 8M8 1L2 9" stroke-width="2" /></svg>
          </button>
          <span class="link">L</span>
        </div>
      </header>

      <nav class="toolbar">
        <span class="grip"></span>
        <span class="sep"></span>
        <button class="text">6E 03-16 {@render caret()}</button>
        <button class="text">{win.interval} {@render caret()}</button>
        <span class="sep"></span>
        <button aria-label="Chart style">
          <svg viewBox="0 0 16 16">
            <path d="M2.500 0v15M7.500 0v15M13 0v15" stroke="#333" />
            <path d="M1 2.500h3v10H1zM6 2.500h3v10H6z" fill="#7be845" stroke="#26801c" />
            <path d="M11.500 3.500h3v9h-3z" fill="#f0564a" stroke="#9c1f17" />
          </svg>
          {@render caret()}
        </button>
        <button aria-label="Drawing tools">
          <svg viewBox="0 0 16 16">
            <path d="M1 15l2-5 8-8.500 3.500 3L6.500 13z" fill="#f5cf45" stroke="#a5812a" stroke-width="0.800" />
            <path d="M11 1.500l1.500-1.200 3 2.800-1 1.400z" fill="#e58a86" stroke="#b05b52" stroke-width="0.500" />
            <path d="M4.500 11.500l8-8.500" stroke="#fff0a0" />
            <path d="M1 15l0.800-2.200 1.600 1.400z" fill="#333" />
          </svg>
          {@render caret()}
        </button>
        <button aria-label="Zoom in">{@render glass("plus")}</button>
        <button aria-label="Zoom out">{@render glass("minus")}</button>
        <span class="sep"></span>
        <button aria-label="Cursor">
          {#if win.cursor === "cross"}
            <svg viewBox="0 0 16 16"><path d="M0 8h6M9 8h5M7.500 1v5.500M7.500 9.500V15" stroke="#111" stroke-width="2" /></svg>
          {:else}
            <svg viewBox="0 0 16 16">
              <path d="M1 1l9 3-3 2 6 7-2 2-6-7-1.500 3z" fill="#fff" stroke="#555" />
            </svg>
          {/if}
          {@render caret()}
        </button>
        <button aria-label="Zoom to selection">
          <svg viewBox="0 0 16 16">
            <path d="M1.500 0.500h13v15h-13z" fill="#fdfdfd" stroke="#7b7b7b" />
            <path d="M5 11l-4 4" stroke="#75706c" stroke-width="2" />
            <circle cx="8" cy="8" r="3.500" fill="#93bde0" stroke="#7f9bb8" />
          </svg>
        </button>
        <span class="sep"></span>
        <button aria-label="Chart trader">
          <svg viewBox="0 0 16 16">
            <path d="M0 1h7v4H0z" fill="#55bb2f" />
            <path d="M0 9h7v4H0z" fill="#d63a30" />
            <path d="M7 3.500h4M7 7h4M7 11h4" stroke="#e08a80" />
            <path d="M11 1v12M14.500 7v9" stroke="#555" />
            <path d="M10 3h2.500v7H10z" fill="#6ccd3f" />
            <path d="M13 9h3v5h-3z" fill="#d63a30" />
          </svg>
        </button>
        <button aria-label="Data series">
          <svg viewBox="0 0 16 16">
            <path d="M0.500 0.500h15v15H0.500z" fill="#dcdcdc" stroke="#777" />
            <path d="M4.500 2v12M8 1v12M12.500 3v12" stroke="#222" />
            <path d="M3 5h3v6H3zM7 3h3v6H7z" fill="#4fbf2c" stroke="#26801c" stroke-width="0.600" />
            <path d="M11 6h3v7h-3z" fill="#d63a30" />
          </svg>
        </button>
        <button aria-label="Indicators">
          <svg viewBox="0 0 16 16">
            <path d="M0.500 0.500h15v15H0.500z" fill="#d3d6d6" stroke="#8b8b8b" />
            <path d="M1 8l3-4 3 2 3-4 2 3 3-1" fill="none" stroke="#3f9c61" />
            <path d="M1 12l3-3 3 2 4-2 4 3" fill="none" stroke="#d97a72" />
          </svg>
        </button>
        <button aria-label="Strategies">
          <svg viewBox="0 0 16 16">
            <path d="M3.500 1.500h8l3 3v11h-11z" fill="#fff" stroke="#888" />
            <text x="9" y="12" class="dollar">$</text>
          </svg>
        </button>
        <button aria-label="Properties">
          <svg viewBox="0 0 16 16">
            <path d="M1.500 0.500h14v15h-14z" fill="#f4f4fb" stroke="#7a87a8" />
            <path d="M2 1h13v3H2z" fill="#6f9bdc" />
            <path d="M3.500 6v8h3V6z" fill="#d9cdf2" stroke="#8a74c4" />
            <path d="M9 7h5M9 10h5" stroke="#c4c4d4" />
          </svg>
        </button>
      </nav>

      <div class="chart">
        {#each win.panels as panel (panel.y)}
          <svg
            class="panel"
            style="flex-grow: {panel.height}"
            viewBox="{win.x} {panel.y} {win.width} {panel.height}"
            preserveAspectRatio="none"
          >
            <clipPath id="plot-{win.id}-{panel.y}">
              <rect x={win.x} y={panel.y} width={win.axis - win.x} height={panel.height} />
            </clipPath>
            {#if panel.y > 56}
              <path class="rule" d="M{win.x} {panel.y + 0.5}h{win.width}" />
            {/if}
            <path class="rule" d="M{win.axis + 0.5} {panel.y > 56 ? panel.y : 61}V{panel.floor ?? panel.y + panel.height}" />
            {#each panel.scale as tick}
              <path class="rule" d="M{win.axis} {tick.y + 0.5}h7" />
              <text x={win.axis + 8} y={tick.y + 5}>{tick.label}</text>
            {/each}

            <g clip-path="url(#plot-{win.id}-{panel.y})">
              <text x={win.x + 3} y={panel.titleY}>{panel.title}</text>
              {#if panel.session}
                <path class="session" d="M1183 {panel.session[0]}V{panel.session[1]}" />
              {/if}
              {#each panel.volume ?? [] as b}
                <rect class="volume" x={b.x} y={b.y} width="2" height={b.h} />
              {/each}
              {#each panel.hist ?? [] as b}
                <rect class="hist" x={b.x} y={b.y} width="2" height={b.h} />
              {/each}
              {#if panel.zero}
                <path class="zero" d="M{win.x} {panel.zero + 0.5}H{win.axis}" />
              {/if}
              {#each panel.candles ?? [] as c}
                <rect class="wick" x={c.x} y={c.high} width="1" height={c.low - c.high} />
                <rect
                  class={c.up ? "up" : "down"}
                  x={c.x - 1}
                  y={c.top}
                  width={panel.candleWidth}
                  height={Math.max(1, c.bottom - c.top)}
                />
              {/each}
              {#each panel.under ?? [] as l}
                <path class="line {l.kind}" d={l.d} />
              {/each}
              {#each panel.over ?? [] as l}
                <path class="line {l.kind}" d={l.d} />
              {/each}
            </g>

            {#if panel.jump}
              <path class="jump" d="M{panel.jump + 0.5} 66.5v20l15-10zM{panel.jump + 17.5} 66.5h3v20h-3z" />
            {/if}
            {#if panel.price}
              <path class="tag" d="M{win.axis + 2} {panel.price}l5-7h37v14h-37z" />
              <text class="tag-text" x={win.axis + 9} y={panel.price + 4}>1.0945</text>
            {/if}
            {#if panel.dates}
              <path class="rule" d="M{win.x} {panel.floor + 0.5}H{win.axis}" />
              <text x={win.x + 3} y={panel.copyright}>© 2016 NinjaTrader, LLC</text>
              {#each panel.dates as date}
                <path class="rule" d="M{date.x + 0.5} {panel.floor}v6" />
                <text class="date" x={date.x} y={panel.dateY}>{date.label}</text>
              {/each}
            {/if}
          </svg>
        {/each}
      </div>

      {#if win.focused}
        <div class="scrollbar">
          <button aria-label="Scroll left">
            <svg viewBox="0 0 8 10"><path d="M6 1L2 5l4 4" /></svg>
          </button>
          <div class="track">
            <button class="thumb" aria-label="Scroll position">
              <svg viewBox="0 0 8 8"><path d="M1 0v8M4 0v8M7 0v8" /></svg>
            </button>
          </div>
          <button aria-label="Scroll right">
            <svg viewBox="0 0 8 10"><path d="M2 1l4 4-4 4" /></svg>
          </button>
        </div>
      {/if}
    </section>
  {/each}
</main>

<style>
  :global(body) {
    margin: 0;
    background: #17395c;
  }

  .desktop {
    display: grid;
    grid-template-columns: 1155fr 761fr;
    gap: 1px;
    height: 100vh;
    overflow: hidden;
    font-family: "Noto Sans", "Open Sans", sans-serif;
    font-size: 11px;
  }

  .window {
    box-sizing: border-box;
    min-width: 0;
    padding: 0 7px 6px 4px;
    border-top: 1px solid #2d628f;
    background: #8db4da;
    display: flex;
    flex-direction: column;
  }

  .window.focused {
    padding: 0 8px 5px 7px;
    background: #1e80d8;
  }

  .caption {
    flex-shrink: 0;
    height: 30px;
    padding-left: 9px;
    background: #1e80d8;
    color: #75b7f0;
    display: flex;
    align-items: center;
  }

  .focused .caption {
    color: #fff;
  }

  .chart-icon {
    width: 14px;
    height: 14px;
    margin-right: 6px;
  }

  h1 {
    flex: 1;
    margin: 0;
    padding-bottom: 2px;
    font-size: 11px;
    font-weight: normal;
    white-space: nowrap;
  }

  button {
    margin: 0;
    padding: 0;
    border: none;
    background: none;
    font: inherit;
    color: inherit;
  }

  .controls {
    position: relative;
    align-self: stretch;
    display: flex;
  }

  .controls button {
    width: 46px;
    border-left: 1px solid #2b78bd;
    display: flex;
    align-items: center;
    justify-content: center;
    box-sizing: border-box;
  }

  .controls svg {
    width: 10px;
    height: 10px;
    fill: none;
    stroke: #0e4476;
  }

  .focused .controls button {
    border-left-color: #0c3358;
    border-bottom: 1px solid #0c3358;
  }

  .focused .controls svg {
    stroke: #000;
  }

  .focused .controls .close {
    background: #bf5a4f;
  }

  .link {
    position: absolute;
    top: 0;
    left: 35px;
    width: 18px;
    height: 19px;
    background: #eee;
    color: #222;
    line-height: 18px;
    text-align: center;
  }

  .toolbar {
    flex-shrink: 0;
    height: 25px;
    padding-left: 3px;
    border-radius: 2px 4px 4px 2px;
    background: linear-gradient(#fff, #f0f0f0);
    color: #000;
    display: flex;
    align-items: center;
    gap: 7px;
    white-space: nowrap;
    overflow: hidden;
  }

  .toolbar button {
    display: flex;
    align-items: center;
    gap: 3px;
    flex-shrink: 0;
    padding-bottom: 1px;
  }

  .toolbar .text {
    width: 58px;
    gap: 0;
    justify-content: space-between;
    line-height: 16px;
  }

  .toolbar svg {
    width: 16px;
    height: 16px;
    overflow: visible;
  }

  .toolbar .caret {
    width: 5px;
    height: 3px;
  }

  .grip {
    width: 2px;
    height: 15px;
    background: repeating-linear-gradient(#aaa 0 2px, transparent 2px 4px);
  }

  .sep {
    width: 1px;
    height: 16px;
    margin: 0 -1px;
    background: #c0c0c0;
  }

  .dollar {
    fill: #1f8a2c;
    font-size: 11px;
    font-weight: bold;
    text-anchor: middle;
  }

  .chart {
    flex: 1;
    min-height: 0;
    background: #304e4f;
    display: flex;
    flex-direction: column;
  }

  .panel {
    display: block;
    flex-basis: 0;
    width: 100%;
    min-height: 0;
    overflow: hidden;
    font-family: "Liberation Sans", Arial, sans-serif;
    font-size: 11px;
  }

  .panel text {
    fill: #858888;
  }

  .panel .date {
    text-anchor: middle;
  }

  .rule {
    stroke: #8a8f8f;
    fill: none;
  }

  .zero {
    stroke: #c4c8c8;
  }

  .session {
    stroke: #7d8080;
    stroke-width: 2;
    stroke-dasharray: 6 3;
  }

  .wick {
    fill: #b4bcbc;
  }

  .up {
    fill: #3cc43c;
  }

  .down {
    fill: #c81818;
  }

  .hist {
    fill: #2590ff;
  }

  .volume {
    fill: #14b8fa;
  }

  .hist,
  .volume,
  .wick,
  .up,
  .down {
    shape-rendering: crispEdges;
  }

  .line {
    fill: none;
    stroke-linejoin: round;
  }

  .band {
    stroke: #f09a1c;
    stroke-width: 2;
  }

  .inner {
    stroke: #7f8787;
  }

  .macd {
    stroke: #20f020;
    stroke-width: 2;
  }

  .signal {
    stroke: #9a2bb4;
    stroke-width: 1.5;
  }

  .adx {
    stroke-width: 2;
    stroke-dasharray: 5 2;
  }

  .coral {
    stroke-width: 4;
    stroke-dasharray: 4 4;
  }

  .dots {
    stroke-width: 2;
    stroke-dasharray: 2 2;
  }

  .cyan {
    stroke: #1df0f0;
  }

  .yellow {
    stroke: #ffff20;
  }

  .red {
    stroke: #f00c0c;
  }

  .darkred {
    stroke: #b41c1c;
    stroke-width: 1;
    stroke-dasharray: none;
  }

  .salmon {
    stroke: #f09484;
  }

  .trend {
    stroke: #ffff28;
    stroke-width: 2;
  }

  .high {
    stroke: #3cb371;
  }

  .low {
    stroke: #bc1f1f;
    stroke-width: 3;
    stroke-dasharray: 3 1;
  }

  .frame {
    stroke: #fff;
    stroke-width: 2;
    stroke-linejoin: miter;
  }

  .jump {
    fill: none;
    stroke: #858888;
  }

  .tag {
    fill: #ffff00;
  }

  .panel .tag-text {
    fill: #111;
  }

  .scrollbar {
    flex-shrink: 0;
    height: 24px;
    background: #fff;
    display: flex;
  }

  .scrollbar button {
    width: 17px;
    display: flex;
    align-items: center;
    justify-content: center;
  }

  .scrollbar svg {
    width: 8px;
    height: 10px;
    fill: none;
    stroke: #333;
  }

  .track {
    flex: 1;
    border-left: 1px solid #ccc;
    border-right: 1px solid #999;
    display: grid;
    grid-template-columns: 452fr 260fr;
  }

  .scrollbar .thumb {
    grid-column: 2;
    width: auto;
    border-left: 1px solid #aaa;
    background: #dadada;
  }
</style>
